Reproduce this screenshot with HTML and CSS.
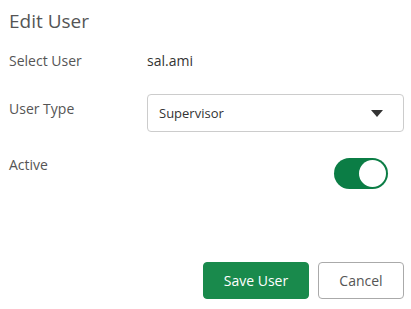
FILE: index.html
```html
<!DOCTYPE html>
<html>
<head>
<meta charset="utf-8">
<link rel="stylesheet" href="styles.css">
</head>
<body>
<div class="dialog">
  <h1 class="title">Edit User</h1>
  <div class="form">
    <div class="row row-user">
      <div class="label">Select User</div>
      <div class="value">sal.ami</div>
    </div>
    <div class="row row-type">
      <div class="label">User Type</div>
      <div class="select">
        <span class="select-text">Supervisor</span>
        <svg class="caret" width="12" height="7" viewBox="0 0 12 7"><path d="M0 0H12L6 7Z" fill="#333"/></svg>
      </div>
    </div>
    <div class="row row-active">
      <div class="label">Active</div>
      <div class="toggle-wrap">
        <div class="toggle"><div class="knob"></div></div>
      </div>
    </div>
  </div>
  <div class="actions">
    <button class="btn btn-save">Save User</button>
    <button class="btn btn-cancel">Cancel</button>
  </div>
</div>
</body>
</html>
```
FILE: styles.css
```css
html, body {
  margin: 0;
  padding: 0;
  background: #fff;
}
body {
  font-family: "Open Sans", "Noto Sans", sans-serif;
  color: #555;
}
.dialog {
  width: 411px;
  height: 309px;
  box-sizing: border-box;
  padding: 8px 7px 0 9px;
  display: flex;
  flex-direction: column;
}
.title {
  margin: 0;
  font-size: 19px;
  font-weight: 400;
  line-height: 26px;
  color: #555;
}
.form {
  display: flex;
  flex-direction: column;
}
.row {
  display: grid;
  grid-template-columns: 138px 1fr;
  align-items: start;
}
.label {
  font-size: 14px;
  line-height: 20px;
  color: #555;
}
.row-user {
  margin-top: 17px;
}
.value {
  font-size: 14px;
  line-height: 20px;
  color: #333;
}
.row-type {
  margin-top: 23px;
}
.row-type .label {
  padding-top: 5px;
}
.select {
  height: 38px;
  box-sizing: border-box;
  border: 1px solid #ccc;
  border-radius: 4px;
  display: flex;
  align-items: center;
  justify-content: space-between;
  padding: 0 20px 0 11px;
}
.select-text {
  font-size: 13px;
  color: #333;
}
.caret {
  display: block;
}
.row-active {
  margin-top: 23px;
}
.toggle-wrap {
  display: flex;
  justify-content: flex-end;
  padding-right: 16px;
  padding-top: 3px;
}
.toggle {
  width: 54px;
  height: 31px;
  border-radius: 16px;
  background: #0b7d45;
  display: flex;
  justify-content: flex-end;
  align-items: center;
  padding: 0 2px;
  box-sizing: border-box;
}
.knob {
  width: 27px;
  height: 27px;
  border-radius: 50%;
  background: #fff;
}
.actions {
  margin-top: auto;
  margin-bottom: 10px;
  display: flex;
  justify-content: flex-end;
  gap: 9px;
}
.btn {
  height: 37px;
  border-radius: 4px;
  font-family: "Open Sans", "Noto Sans", sans-serif;
  font-size: 14px;
  box-sizing: border-box;
  cursor: pointer;
}
.btn-save {
  width: 106px;
  background: #198a4c;
  border: 1px solid #198a4c;
  color: #fff;
}
.btn-cancel {
  width: 86px;
  background: #fff;
  border: 1px solid #aaa;
  color: #555;
}
```
